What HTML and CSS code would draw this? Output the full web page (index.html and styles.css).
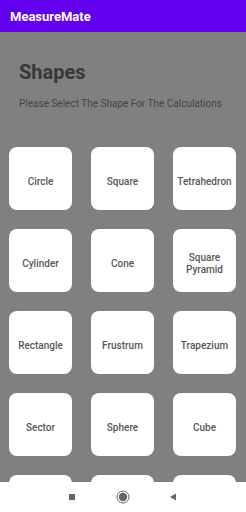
FILE: index.html
```html
<!DOCTYPE html>
<html lang="en">
<head>
    <meta charset="UTF-8">
    <meta name="viewport" content="width=device-width, initial-scale=1.0">
    <title>MeasureMate</title>
    <link rel="stylesheet" href="styles.css">
</head>
<body>
    <div class="screen">
        <div class="appbar">MeasureMate</div>

        <div class="main">
            <h1 class="title">Shapes</h1>
            <p class="subtitle">Please Select The Shape For The Calculations</p>

            <div class="grid">
                <div class="card">Circle</div>
                <div class="card">Square</div>
                <div class="card">Tetrahedron</div>
                <div class="card">Cylinder</div>
                <div class="card">Cone</div>
                <div class="card">Square<br>Pyramid</div>
                <div class="card">Rectangle</div>
                <div class="card">Frustrum</div>
                <div class="card">Trapezium</div>
                <div class="card">Sector</div>
                <div class="card">Sphere</div>
                <div class="card">Cube</div>
                <div class="card"></div>
                <div class="card"></div>
                <div class="card"></div>
            </div>
        </div>

        <div class="navbar">
            <span class="nav-square"></span>
            <svg class="nav-home" width="14" height="14" viewBox="0 0 14 14">
                <circle cx="7" cy="7" r="6" fill="none" stroke="#666" stroke-width="1"/>
                <circle cx="7" cy="7" r="4.2" fill="#666"/>
            </svg>
            <svg class="nav-back" width="8" height="8" viewBox="0 0 8 8">
                <polygon points="7,0.5 7,7.5 1,4" fill="#666"/>
            </svg>
        </div>
    </div>
</body>
</html>
```

FILE: styles.css
```css
* {
    box-sizing: border-box;
}
body {
    margin: 0;
    font-family: Roboto, "Liberation Sans", sans-serif;
}
.screen {
    width: 246px;
    height: 512px;
    display: flex;
    flex-direction: column;
    background: #808080;
    overflow: hidden;
}
.appbar {
    height: 32px;
    flex-shrink: 0;
    background: #6200ee;
    color: #fff;
    font-size: 13px;
    font-weight: 700;
    padding-left: 10px;
    display: flex;
    align-items: center;
}
.main {
    flex: 1;
    overflow: hidden;
    padding: 28px 10px 0 9px;
}
.title {
    margin: 0 0 0 10px;
    font-size: 20px;
    line-height: 24px;
    font-weight: 700;
    color: #383838;
}
.subtitle {
    margin: 14px 0 0 10px;
    font-size: 10px;
    line-height: 12px;
    color: #454545;
}
.grid {
    margin-top: 37px;
    display: grid;
    grid-template-columns: repeat(3, 63px);
    grid-auto-rows: 63px;
    gap: 19px;
}
.card {
    background: #fff;
    border-radius: 8px;
    display: flex;
    align-items: center;
    justify-content: center;
    padding-top: 6px;
    text-align: center;
    font-size: 10px;
    line-height: 12px;
    font-weight: 500;
    color: #585858;
}
.navbar {
    height: 30px;
    flex-shrink: 0;
    background: #fff;
    display: flex;
    align-items: center;
    padding-left: 69px;
}
.nav-square {
    width: 6px;
    height: 6px;
    background: #666;
}
.nav-home {
    margin-left: 41px;
}
.nav-back {
    margin-left: 39px;
}
```
